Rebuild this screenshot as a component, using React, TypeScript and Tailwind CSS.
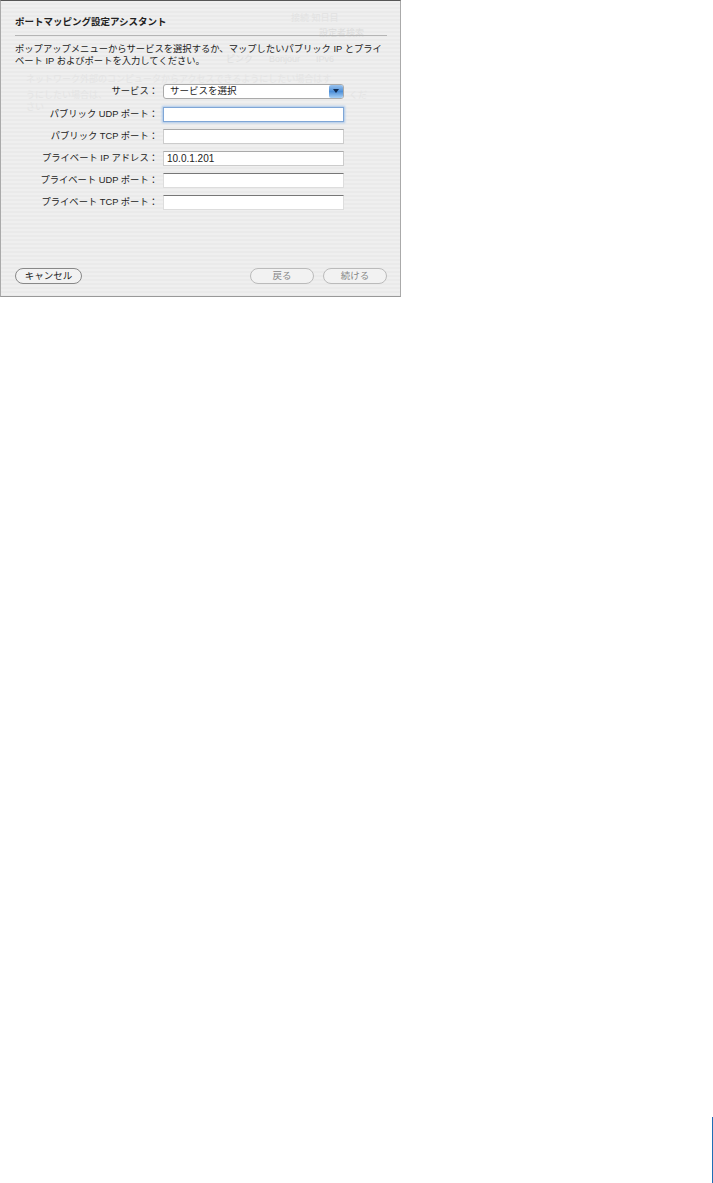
const cjk = "font-['Liberation_Sans','Noto_Sans_CJK_JP',sans-serif]";

const fields = [
  { label: "パブリック UDP ポート：", value: "", focus: true, dark: false },
  { label: "パブリック TCP ポート：", value: "", focus: false, dark: false },
  { label: "プライベート IP アドレス：", value: "10.0.1.201", focus: false, dark: false },
  { label: "プライベート UDP ポート：", value: "", focus: false, dark: true },
  { label: "プライベート TCP ポート：", value: "", focus: false, dark: true },
];

function Label({ children }: { children: string }) {
  return <div className="w-[143px] shrink-0 text-right text-[9.3px] leading-[15px] text-[#222]">{children}</div>;
}

function Field({ label, value, focus, dark }: { label: string; value: string; focus: boolean; dark: boolean }) {
  const box = focus
    ? "border border-[#7fa6d6] shadow-[0_0_2px_1px_#a9c6ea]"
    : dark
      ? "border border-[#ddd] border-t-[#777]"
      : "border border-[#ccc] border-t-[#aaa]";
  return (
    <div className="flex h-[22px] items-center gap-[5px]">
      <Label>{label}</Label>
      <div className={`flex h-[15px] w-[181px] items-center bg-white px-[3px] text-[10px] text-[#222] ${box}`}>{value}</div>
    </div>
  );
}

function Pill({ label, disabled, className }: { label: string; disabled?: boolean; className: string }) {
  return (
    <div
      className={`flex h-[16px] items-center justify-center rounded-full border bg-[#f2f2f2] text-[9.5px] ${className} ${
        disabled ? "border-[#bbb] text-[#888]" : "border-[#888] text-[#222]"
      }`}
    >
      {label}
    </div>
  );
}

export default function App() {
  return (
    <div className={`relative h-[1183px] w-[713px] overflow-hidden bg-white ${cjk}`}>
      <div className="relative h-[297px] w-[401px] border-x border-b border-x-[#aaa] border-b-[#999] border-t border-t-[#555] bg-[repeating-linear-gradient(180deg,#efefef_0px,#efefef_2px,#eaeaea_2px,#eaeaea_4px)]">
        {/* faint sheet of the window behind */}
        <div className="absolute left-[290px] top-[11px] text-[9px] text-[#e2e2e2]">接続 知日目</div>
        <div className="absolute left-[318px] top-[26px] text-[9px] text-[#dcdcdc]">設定者検索</div>
        <div className="absolute left-[225px] top-[52px] flex gap-[16px] text-[9px] text-[#e0e0e0]">
          <span>ピンク</span>
          <span>Bonjour</span>
          <span>IPv6</span>
        </div>
        <div className="absolute left-[25px] top-[73px] whitespace-nowrap text-[9px] leading-[10px] text-[#e4e4e4]">
          ネットワーク外部のコンピュータからアクセスできるようにしたい場合はす
        </div>
        <div className="absolute left-[25px] top-[89px] text-[9px] leading-[10px] text-[#e4e4e4]">うにしたい場合は、</div>
        <div className="absolute left-[348px] top-[89px] text-[9px] leading-[10px] text-[#e4e4e4]">くだ</div>
        <div className="absolute left-[25px] top-[101px] text-[9px] leading-[10px] text-[#e4e4e4]">さい</div>

        <div className="relative flex h-full flex-col pl-[14px] pr-[13px]">
          <div className="mt-[14px] text-[9.5px] font-bold leading-[13px] text-[#222]">ポートマッピング設定アシスタント</div>
          <div className="mt-[7px] h-px bg-[#b5b5b5]" />
          <div className="mt-[7px] whitespace-nowrap text-[9.3px] leading-[12px] text-[#222]">
            ポップアップメニューからサービスを選択するか、マップしたいパブリック IP とプライ
            <br />
            ベート IP およびポートを入力してください。
          </div>

          <div className="mt-[16px] flex h-[16px] items-center gap-[5px]">
            <Label>サービス：</Label>
            <div className="flex h-[15px] w-[181px] items-center justify-between rounded-[3px] border border-[#aaa] bg-white pl-[6px] text-[9.5px] text-[#222]">
              サービスを選択
              <div className="flex h-[13px] w-[14px] items-center justify-center rounded-[2px] bg-[linear-gradient(180deg,#9cc4ee,#4d8fd8_50%,#a8d0f5)]">
                <div className="h-0 w-0 border-x-[3px] border-t-[4px] border-x-transparent border-t-[#102a50]" />
              </div>
            </div>
          </div>

          <div className="mt-[4px] flex flex-col">
            {fields.map((f) => (
              <Field key={f.label} {...f} />
            ))}
          </div>

          <div className="mt-auto mb-[12px] flex items-center">
            <Pill label="キャンセル" className="w-[67px]" />
            <div className="ml-auto flex gap-[9px]">
              <Pill label="戻る" disabled className="w-[64px]" />
              <Pill label="続ける" disabled className="w-[64px]" />
            </div>
          </div>
        </div>
      </div>
      <div className="absolute bottom-0 right-0 h-[66px] w-px bg-[#1f6fb5]" />
    </div>
  );
}
